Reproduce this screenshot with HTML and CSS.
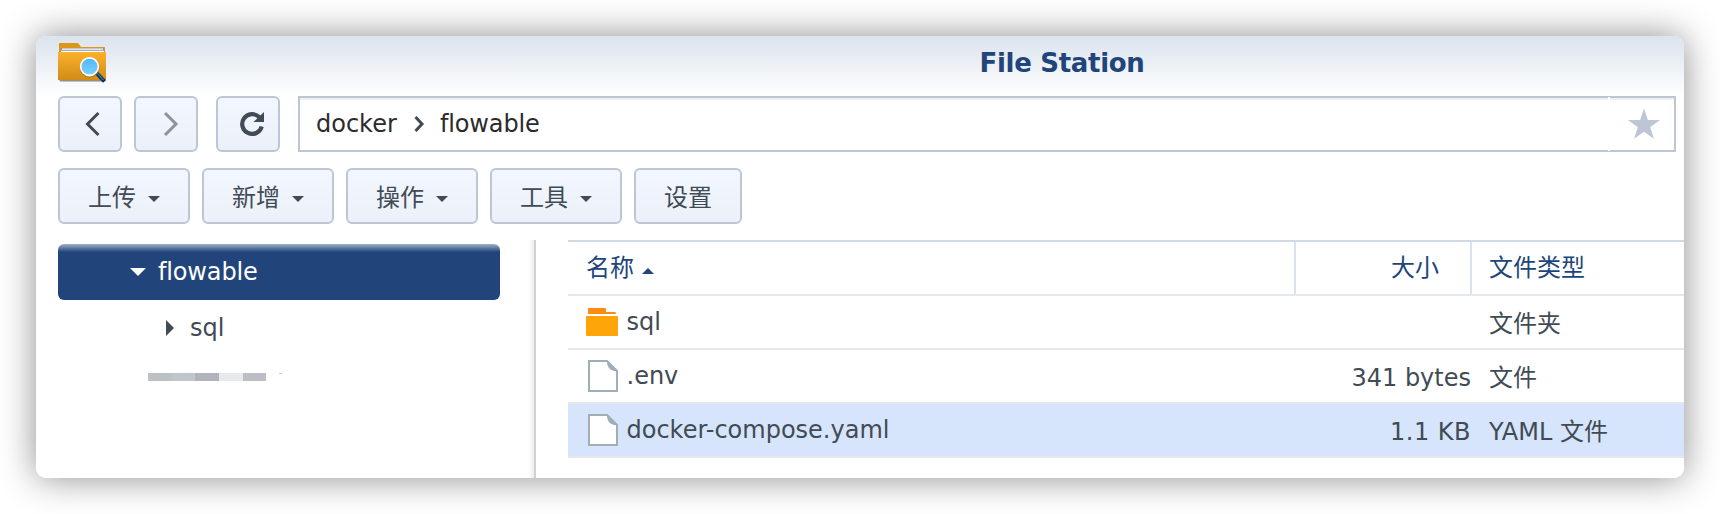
FILE: index.html
```html
<!DOCTYPE html>
<html lang="zh-CN">
<head>
<meta charset="utf-8">
<title>File Station</title>
<link rel="stylesheet" href="styles.css">
</head>
<body>
<main class="window">
  <header class="titlebar">
    <svg class="app-icon" width="50" height="44" viewBox="0 0 50 44">
      <defs>
        <linearGradient id="front" x1="0" y1="0" x2="0" y2="1"><stop offset="0" stop-color="#fbb12c"/><stop offset="1" stop-color="#d28c16"/></linearGradient>
        <linearGradient id="lens" x1="0" y1="0" x2="0" y2="1"><stop offset="0" stop-color="#4bb6fb"/><stop offset="1" stop-color="#7fd2ff"/></linearGradient>
      </defs>
      <path d="M1 3h19l3 4h24v8H1z" fill="#dc961c"/>
      <path d="M3 8h43v5H3z" fill="#8e9098"/>
      <path d="M4 8.500h41v1.200H4zM3 10.800h43v1.400H3z" fill="#fff"/>
      <path d="M1 39h46l-1 2.500H2z" fill="#6d6150" opacity=".7"/>
      <path d="M0 12h48v28H0z" fill="url(#front)"/>
      <path d="M38.500 33l8 8.500" stroke="#12314e" stroke-width="4"/>
      <path d="M39 33l6.500 7" stroke="#2479ad" stroke-width="1.300"/>
      <circle cx="31.700" cy="27.700" r="10" fill="#8a6428" opacity=".5"/>
      <circle cx="31.500" cy="26.700" r="8.800" fill="url(#lens)" stroke="#fffdf2" stroke-width="1.800"/>
    </svg>
    <h1 class="title">File Station</h1>
  </header>

  <nav class="navbar">
    <button class="btn nav-btn"><svg width="24" height="28" viewBox="0 0 24 28"><path d="M16.500 3L5.500 14l11 11" fill="none" stroke="#414b55" stroke-width="3"/></svg></button>
    <button class="btn nav-btn"><svg width="24" height="28" viewBox="0 0 24 28"><path d="M7 3l11 11L7 25" fill="none" stroke="#8b949e" stroke-width="3"/></svg></button>
    <button class="btn nav-btn reload"><svg width="26" height="28" viewBox="0 0 26 28"><path d="M20.300 7.200A9.900 9.900 0 1 0 22.700 16.500" fill="none" stroke="#414b55" stroke-width="4.200"/><path d="M25 2v10H14.500z" fill="#414b55"/></svg></button>
    <div class="path">
      <span class="crumb crumb-root">docker</span>
      <svg class="sep" width="12" height="18" viewBox="0 0 12 18"><path d="M1.500 2l6.500 7-6.500 7" fill="none" stroke="#414b55" stroke-width="3"/></svg>
      <span class="crumb crumb-dir">flowable</span>
      <span class="notch"></span>
      <svg class="star" width="32" height="32" viewBox="0 0 32 32"><path d="M16 0.500l3.900 11.500H32l-9.800 7.200 3.700 11.600L16 23.800l-9.900 7 3.700-11.600L0 12h12.100z" fill="#bcc6d5"/></svg>
    </div>
  </nav>

  <div class="toolbar">
    <button class="btn tool"><span>上传</span><i class="caret"></i></button>
    <button class="btn tool"><span>新增</span><i class="caret"></i></button>
    <button class="btn tool"><span>操作</span><i class="caret"></i></button>
    <button class="btn tool"><span>工具</span><i class="caret"></i></button>
    <button class="btn tool plain"><span>设置</span></button>
  </div>

  <div class="body">
    <aside class="tree">
      <div class="node selected"><i class="open"></i><span>flowable</span></div>
      <div class="node child"><i class="closed"></i><span>sql</span></div>
      <div class="masked"><i></i><i></i><i></i><i></i><i></i><b></b></div>
    </aside>
    <div class="splitter"></div>
    <section class="list">
      <div class="row head">
        <div class="name">名称<i class="sort"></i></div>
        <div class="size">大小</div>
        <div class="type">文件类型</div>
      </div>
      <div class="row">
        <div class="name"><svg class="icon" width="32" height="32" viewBox="0 0 32 32"><path d="M2 8V3q0-1 1-1h16q1 0 1 1v3h9q1 0 1 2H2z" fill="#ff8c0c"/><path d="M1 10h30q1 0 1 1v18q0 1-1 1H1q-1 0-1-1V11q0-1 1-1z" fill="#ffa50a"/></svg><span>sql</span></div>
        <div class="size"></div>
        <div class="type">文件夹</div>
      </div>
      <div class="row">
        <div class="name"><svg class="icon" width="32" height="32" viewBox="0 0 32 32"><path d="M3 1h18l10 10v20H3z" fill="#fff" stroke="#9faeb7" stroke-width="2"/><path d="M21 0l11 11h-4q-7-2-7-9z" fill="#9faeb7"/></svg><span>.env</span></div>
        <div class="size">341 bytes</div>
        <div class="type">文件</div>
      </div>
      <div class="row active">
        <div class="name"><svg class="icon" width="32" height="32" viewBox="0 0 32 32"><path d="M3 1h18l10 10v20H3z" fill="#fff" stroke="#9faeb7" stroke-width="2"/><path d="M21 0l11 11h-4q-7-2-7-9z" fill="#9faeb7"/></svg><span>docker-compose.yaml</span></div>
        <div class="size wide">1.1 KB</div>
        <div class="type">YAML 文件</div>
      </div>
    </section>
  </div>
</main>
</body>
</html>
```
FILE: styles.css
```css
* { box-sizing: border-box; }
body {
  margin: 0;
  padding: 36px;
  height: 514px;
  overflow: hidden;
  background: #fff;
  font: 24px/32px Verdana, "DejaVu Sans", "Noto Sans CJK SC", sans-serif;
  font-variant-ligatures: none;
  color: #414b55;
}
.window {
  width: 1648px;
  height: 442px;
  border-radius: 10px;
  background: linear-gradient(#dbe3ee, #fff 60px);
  box-shadow: 0 0 36px rgba(0, 0, 0, .45);
  overflow: hidden;
}
.titlebar {
  height: 60px;
  padding: 4px 0 0 22px;
  display: flex;
}
.app-icon { flex: none; }
.title {
  flex: 1;
  margin: 6px 0 0 332px;
  text-align: center;
  font-size: 26px;
  letter-spacing: -.3px;
  line-height: 34px;
  color: #21457a;
}
.navbar { display: flex; padding-left: 22px; height: 56px; }
.btn {
  height: 56px;
  padding: 0;
  border: 2px solid #bcc6d5;
  border-radius: 6px;
  background: linear-gradient(#f3f7ff, #ebf0f9);
  color: #414b55;
  font: inherit;
  display: flex;
  align-items: center;
}
.nav-btn { width: 64px; margin-right: 12px; justify-content: center; padding-left: 8px; }
.reload { margin: 0 18px 0 6px; }
.path {
  position: relative;
  width: 1378px;
  height: 56px;
  padding: 0 14px 0 16px;
  border: 2px solid #bcc6d5;
  background: linear-gradient(#efefef 2px, #fff 2px);
  color: #2b2b2b;
  display: flex;
  align-items: center;
}
.crumb-root { width: 98px; }
.crumb-dir { letter-spacing: -.15px; }
.sep { margin: 0 14px 0 0; }
.notch {
  position: absolute;
  right: 64px;
  top: -1px;
  width: 2px;
  height: 54px;
  background: #fff;
}
.star { margin: 0 0 0 auto; }
.toolbar { display: flex; gap: 12px; padding: 16px 0 0 22px; }
.tool { width: 132px; padding: 0 0 0 28px; }
.tool span { padding-top: 3px; }
.plain { width: 108px; }
.caret {
  margin: 6px 0 0 12px;
  border: 6px solid transparent;
  border-top-color: #414b55;
  border-bottom: 0;
}
.body { display: flex; height: 238px; margin-top: 16px; }
.tree { width: 464px; padding: 4px 0 0 22px; }
.node { height: 56px; display: flex; align-items: center; }
.selected {
  border-radius: 6px;
  background: linear-gradient(#9fb1cb, #21457a 8px);
  color: #fff;
  padding-left: 72px;
}
.tree .selected { width: 442px; letter-spacing: -.15px; }
.open { border: 8px solid transparent; border-top-color: #fff; border-bottom: 0; margin-right: 12px; }
.child { padding-left: 108px; }
.closed { border: 8px solid transparent; border-left-color: #414b55; border-right: 0; margin-right: 16px; }
.masked { display: flex; margin: 17px 0 0 90px; filter: blur(.5px); }
.masked i { width: 23.7px; height: 8px; background: #bcc1c5; }
.masked i:nth-child(2) { background: #c1c6ca; }
.masked i:nth-child(3) { background: #b1b4bb; }
.masked i:nth-child(4) { background: #e8e9eb; }
.masked i:nth-child(5) { background: #bcbec4; }
.masked b { width: 3px; height: 1px; margin-left: 13px; background: #ccc; }
.splitter {
  width: 8px;
  margin: 0 32px 0 28px;
  border-right: 2px solid #d2d2d2;
  background: linear-gradient(90deg, #fff, #ededed);
}
.list { width: 1116px; border-top: 2px solid #d0dae6; }
.row {
  height: 54px;
  border-bottom: 2px solid #e4e9f0;
  display: grid;
  grid-template-columns: 728px 176px 1fr;
}
.row > div { display: flex; align-items: center; white-space: pre; padding-top: 3px; }
.row .name { padding: 0 0 0 18px; }
.row .size { justify-content: flex-end; padding-right: 1px; }
.row .type { padding-left: 17px; }
.icon { margin-right: 8.5px; }
.head { color: #21457a; }
.row.head > div { padding-top: 0; }
.row.head .size { padding-right: 31px; }
.head .name, .head .size { border-right: 2px solid #d9e2ef; }
.sort { border: 6px solid transparent; border-bottom-color: #21457a; border-top: 0; margin: 5px 0 0 8px; }
.wide { letter-spacing: .5px; }
.active { background: #d6e5fb; }
```
